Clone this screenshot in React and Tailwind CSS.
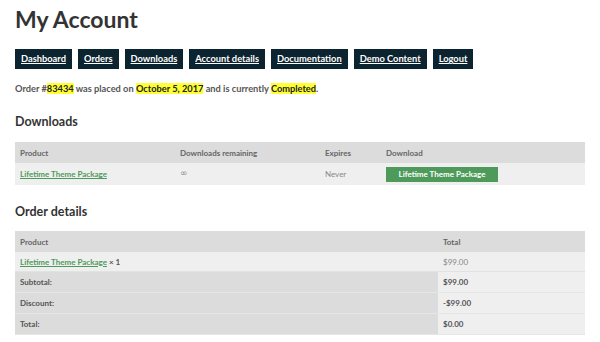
export default function App() {
  const nav = ["Dashboard", "Orders", "Downloads", "Account details", "Documentation", "Demo Content", "Logout"];
  const hl = "bg-[#ffff33] text-[#222]";
  return (
    <div className="w-[600px] h-[342px] bg-white overflow-hidden px-[15px] text-[#555]" style={{ fontFamily: "Lato, 'Open Sans', sans-serif" }}>
      <h1 className="pt-[6px] text-[23px] leading-[26px] font-bold text-[#333]">My Account</h1>
      <div className="mt-[17px] flex gap-[6px]">
        {nav.map((n) => (
          <a key={n} className="h-[20px] px-[6px] flex items-center bg-[#0c2330] text-white text-[9.3px] font-bold underline">
            {n}
          </a>
        ))}
      </div>
      <p className="mt-[13px] text-[9.25px] leading-[13px] font-bold text-[#555]">
        Order #<mark className={hl}>83434</mark> was placed on <mark className={hl}>October 5, 2017</mark> and is currently <mark className={hl}>Completed</mark>.
      </p>
      <h2 className="mt-[18px] text-[12.5px] leading-[18px] font-bold text-[#333]">Downloads</h2>
      <div className="mt-[11px] w-[570px] text-[8px]">
        <div className="flex h-[21px] items-center bg-[#dcdcdc] font-bold text-[#666]">
          <div className="w-[165px] pl-[5px]">Product</div>
          <div className="w-[145px]">Downloads remaining</div>
          <div className="w-[61px]">Expires</div>
          <div>Download</div>
        </div>
        <div className="flex h-[22px] items-center bg-[#efefef]">
          <div className="w-[165px] pl-[5px] font-bold text-[#4e9a5b] underline">Lifetime Theme Package</div>
          <div className="w-[145px] text-[#888] text-[9px]" style={{ fontFamily: "'DejaVu Sans', sans-serif" }}>∞</div>
          <div className="w-[61px] text-[#888]">Never</div>
          <div className="w-[112px] h-[15px] bg-[#4e9a5b] text-white font-bold flex items-center justify-center">Lifetime Theme Package</div>
        </div>
      </div>
      <h2 className="mt-[18px] text-[12.5px] leading-[18px] font-bold text-[#333]">Order details</h2>
      <div className="mt-[10px] w-[570px] text-[8px]">
        <div className="flex h-[21px] items-center bg-[#dcdcdc] font-bold text-[#666]">
          <div className="w-[423px] pl-[5px]">Product</div>
          <div className="pl-[5px]">Total</div>
        </div>
        <div className="flex h-[20px] items-center bg-[#efefef] border-b border-[#e2e2e2]">
          <div className="w-[423px] pl-[5px] font-bold"><span className="text-[#4e9a5b] underline">Lifetime Theme Package</span> <span className="text-[#555]">× 1</span></div>
          <div className="pl-[5px] text-[#888]">$99.00</div>
        </div>
        {[["Subtotal:", "$99.00"], ["Discount:", "-$99.00"], ["Total:", "$0.00"]].map(([a, b]) => (
          <div key={a} className="flex h-[21px] border-b border-[#e6e6e6] font-bold text-[#555]">
            <div className="w-[423px] pl-[5px] bg-[#dcdcdc] flex items-center">{a}</div>
            <div className="flex-1 pl-[5px] bg-[#efefef] flex items-center">{b}</div>
          </div>
        ))}
      </div>
    </div>
  );
}
